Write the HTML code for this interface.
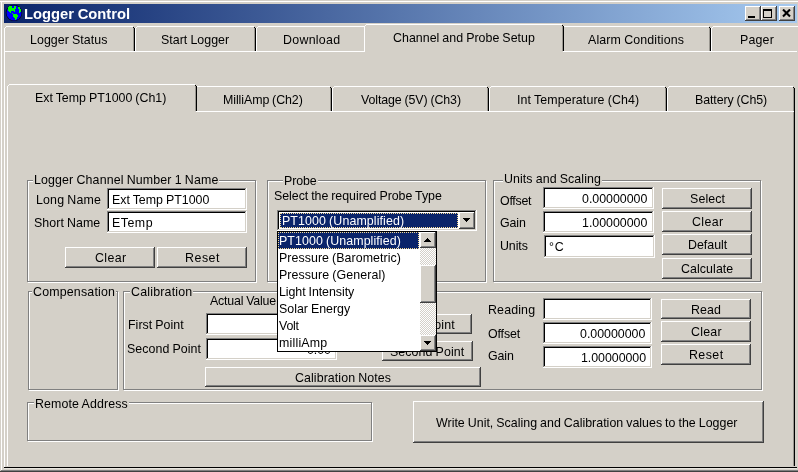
<!DOCTYPE html>
<html lang="en"><head><meta charset="utf-8"><title>Logger Control</title>
<style>
html,body{margin:0;padding:0;}
body{width:798px;height:472px;overflow:hidden;background:#d4d0c8;position:relative;
 font-family:"Liberation Sans",sans-serif;font-size:12.4px;color:#000;}
#w{position:absolute;left:0;top:0;width:798px;height:472px;overflow:hidden;background:#d4d0c8;}
#w>*{position:absolute;}
i{display:block;}
.t{line-height:14px;white-space:nowrap;will-change:transform;word-spacing:-0.45px;}
.leg{background:#d4d0c8;}
.w{color:#fff;}
.ttl{color:#fff;font-weight:bold;}
.title{background:linear-gradient(to right,#0a246a,#a6caf0);}
.btn{background:#d4d0c8;box-sizing:border-box;
 box-shadow:inset -1px -1px 0 #404040,inset 1px 1px 0 #fff,inset -2px -2px 0 #808080;}
.inp{background:#fff;box-sizing:border-box;
 box-shadow:inset -1px -1px 0 #fff,inset 1px 1px 0 #808080,inset -2px -2px 0 #d4d0c8,inset 2px 2px 0 #000;}
.grp{box-sizing:border-box;border:1px solid #808080;box-shadow:1px 1px 0 #fff,inset 1px 1px 0 #fff;}
.list{background:#fff;box-sizing:border-box;border:1px solid #000;}
.sbtrack{background-color:#fff;background-image:linear-gradient(45deg,#d4d0c8 25%,transparent 25%,transparent 75%,#d4d0c8 75%),linear-gradient(45deg,#d4d0c8 25%,transparent 25%,transparent 75%,#d4d0c8 75%);background-size:2px 2px;background-position:0 0,1px 1px;}
</style></head>
<body><div id="w">
<i style="left:0px;top:1px;width:798px;height:1px;background:#fff"></i>
<i style="left:1px;top:1px;width:1px;height:470px;background:#fff"></i>
<i style="left:0px;top:471px;width:798px;height:1px;background:#404040"></i>
<i style="left:1px;top:470px;width:797px;height:1px;background:#808080"></i>
<div class="title" style="left:4px;top:4px;width:793px;height:19px;"></div>
<svg class="abs" style="left:6px;top:5px;overflow:visible" width="16" height="16" viewBox="0 0 16 16">
<circle cx="8" cy="7.9" r="8.2" fill="#000" fill-opacity="0.8"/>
<circle cx="8" cy="7.9" r="7.5" fill="#0000ff"/>
<g fill="#00ff00" shape-rendering="crispEdges"><rect x="3" y="1" width="3" height="1"/><rect x="8" y="1" width="2" height="1"/><rect x="2" y="2" width="4" height="1"/><rect x="8" y="2" width="2" height="1"/><rect x="12" y="2" width="2" height="1"/><rect x="2" y="3" width="8" height="1"/><rect x="12" y="3" width="2" height="1"/><rect x="2" y="4" width="7" height="1"/><rect x="13" y="4" width="2" height="1"/><rect x="2" y="5" width="7" height="1"/><rect x="13" y="5" width="2" height="1"/><rect x="3" y="6" width="2" height="1"/><rect x="8" y="6" width="1" height="1"/><rect x="13" y="6" width="2" height="1"/><rect x="4" y="7" width="1" height="1"/><rect x="13" y="7" width="1" height="1"/><rect x="6" y="8" width="1" height="1"/><rect x="7" y="9" width="4" height="1"/><rect x="7" y="10" width="5" height="1"/><rect x="7" y="11" width="5" height="1"/><rect x="8" y="12" width="3" height="1"/><rect x="9" y="13" width="2" height="1"/><rect x="9" y="14" width="1" height="1"/></g>
</svg>
<span class="t ttl" style="left:23.85px;top:7.15px;transform:scaleX(1.0545);transform-origin:0 0;font-size:14.0px;">Logger Control</span>
<div class="btn" style="left:745px;top:6px;width:16px;height:15px;"></div>
<div class="btn" style="left:761px;top:6px;width:16px;height:15px;"></div>
<div class="btn" style="left:779px;top:6px;width:16px;height:15px;"></div>
<i style="left:748px;top:16px;width:7px;height:2px;background:#000"></i>
<i style="left:763px;top:9px;width:9px;height:9px;border:1px solid #000;border-top-width:2px;box-sizing:border-box"></i>
<svg class="abs" style="left:782px;top:9px" width="10" height="9" viewBox="0 0 10 9"><path d="M1 0.5 L8 7.5 M8 0.5 L1 7.5" stroke="#000" stroke-width="2.1" fill="none"/></svg>
<i style="left:4px;top:51px;width:1px;height:416px;background:#fff"></i>
<i style="left:4px;top:51px;width:793px;height:1px;background:#fff"></i>
<i style="left:4px;top:467px;width:793px;height:1px;background:#000"></i>
<i style="left:4px;top:468px;width:793px;height:1px;background:#e8e5de"></i>
<i style="left:4px;top:28px;width:1px;height:23px;background:#fff"></i>
<i style="left:5px;top:27px;width:1px;height:1px;background:#fff"></i>
<i style="left:6px;top:26px;width:127px;height:1px;background:#fff"></i>
<i style="left:134px;top:28px;width:1px;height:23px;background:#000"></i>
<i style="left:133px;top:28px;width:1px;height:23px;background:#9a9790"></i>
<i style="left:133px;top:27px;width:1px;height:1px;background:#000"></i>
<span class="t" style="left:29.90px;top:32.70px;letter-spacing:0.058px;">Logger Status</span>
<i style="left:135px;top:28px;width:1px;height:23px;background:#fff"></i>
<i style="left:136px;top:27px;width:1px;height:1px;background:#fff"></i>
<i style="left:137px;top:26px;width:117px;height:1px;background:#fff"></i>
<i style="left:255px;top:28px;width:1px;height:23px;background:#000"></i>
<i style="left:254px;top:28px;width:1px;height:23px;background:#9a9790"></i>
<i style="left:254px;top:27px;width:1px;height:1px;background:#000"></i>
<span class="t" style="left:160.90px;top:32.70px;letter-spacing:0.036px;">Start Logger</span>
<i style="left:256px;top:28px;width:1px;height:23px;background:#fff"></i>
<i style="left:257px;top:27px;width:1px;height:1px;background:#fff"></i>
<i style="left:258px;top:26px;width:106px;height:1px;background:#fff"></i>
<span class="t" style="left:282.90px;top:32.70px;letter-spacing:0.286px;">Download</span>
<i style="left:564px;top:26px;width:145px;height:1px;background:#fff"></i>
<i style="left:710px;top:28px;width:1px;height:23px;background:#000"></i>
<i style="left:709px;top:28px;width:1px;height:23px;background:#9a9790"></i>
<i style="left:709px;top:27px;width:1px;height:1px;background:#000"></i>
<span class="t" style="left:588.30px;top:32.70px;letter-spacing:0.133px;">Alarm Conditions</span>
<i style="left:711px;top:28px;width:1px;height:23px;background:#fff"></i>
<i style="left:712px;top:27px;width:1px;height:1px;background:#fff"></i>
<i style="left:713px;top:26px;width:89px;height:1px;background:#fff"></i>
<span class="t" style="left:739.90px;top:32.70px;letter-spacing:0.175px;">Pager</span>
<i style="left:364px;top:24px;width:199px;height:28px;background:#d4d0c8"></i>
<i style="left:364px;top:26px;width:1px;height:26px;background:#fff"></i>
<i style="left:365px;top:25px;width:1px;height:1px;background:#fff"></i>
<i style="left:366px;top:24px;width:196px;height:1px;background:#fff"></i>
<i style="left:563px;top:26px;width:1px;height:25px;background:#000"></i>
<i style="left:562px;top:26px;width:1px;height:25px;background:#9a9790"></i>
<i style="left:562px;top:25px;width:1px;height:1px;background:#000"></i>
<span class="t" style="left:393.30px;top:30.70px;letter-spacing:0.027px;">Channel and Probe Setup</span>
<i style="left:7px;top:111px;width:1px;height:355px;background:#fff"></i>
<i style="left:7px;top:111px;width:787px;height:1px;background:#fff"></i>
<i style="left:794px;top:111px;width:1px;height:355px;background:#000"></i>
<i style="left:793px;top:112px;width:1px;height:354px;background:#9a9790"></i>
<i style="left:197px;top:86px;width:133px;height:1px;background:#fff"></i>
<i style="left:331px;top:88px;width:1px;height:23px;background:#000"></i>
<i style="left:330px;top:88px;width:1px;height:23px;background:#9a9790"></i>
<i style="left:330px;top:87px;width:1px;height:1px;background:#000"></i>
<span class="t" style="left:223.30px;top:92.70px;letter-spacing:-0.077px;">MilliAmp (Ch2)</span>
<i style="left:332px;top:88px;width:1px;height:23px;background:#fff"></i>
<i style="left:333px;top:87px;width:1px;height:1px;background:#fff"></i>
<i style="left:334px;top:86px;width:153px;height:1px;background:#fff"></i>
<i style="left:488px;top:88px;width:1px;height:23px;background:#000"></i>
<i style="left:487px;top:88px;width:1px;height:23px;background:#9a9790"></i>
<i style="left:487px;top:87px;width:1px;height:1px;background:#000"></i>
<span class="t" style="left:360.60px;top:92.70px;letter-spacing:-0.100px;">Voltage (5V) (Ch3)</span>
<i style="left:489px;top:88px;width:1px;height:23px;background:#fff"></i>
<i style="left:490px;top:87px;width:1px;height:1px;background:#fff"></i>
<i style="left:491px;top:86px;width:174px;height:1px;background:#fff"></i>
<i style="left:666px;top:88px;width:1px;height:23px;background:#000"></i>
<i style="left:665px;top:88px;width:1px;height:23px;background:#9a9790"></i>
<i style="left:665px;top:87px;width:1px;height:1px;background:#000"></i>
<span class="t" style="left:516.90px;top:92.70px;letter-spacing:0.100px;">Int Temperature (Ch4)</span>
<i style="left:667px;top:88px;width:1px;height:23px;background:#fff"></i>
<i style="left:668px;top:87px;width:1px;height:1px;background:#fff"></i>
<i style="left:669px;top:86px;width:124px;height:1px;background:#fff"></i>
<i style="left:794px;top:88px;width:1px;height:23px;background:#000"></i>
<i style="left:793px;top:88px;width:1px;height:23px;background:#9a9790"></i>
<i style="left:793px;top:87px;width:1px;height:1px;background:#000"></i>
<span class="t" style="left:694.90px;top:92.70px;letter-spacing:-0.083px;">Battery (Ch5)</span>
<i style="left:7px;top:84px;width:189px;height:28px;background:#d4d0c8"></i>
<i style="left:7px;top:86px;width:1px;height:26px;background:#fff"></i>
<i style="left:8px;top:85px;width:1px;height:1px;background:#fff"></i>
<i style="left:9px;top:84px;width:186px;height:1px;background:#fff"></i>
<i style="left:196px;top:86px;width:1px;height:25px;background:#000"></i>
<i style="left:195px;top:86px;width:1px;height:25px;background:#9a9790"></i>
<i style="left:195px;top:85px;width:1px;height:1px;background:#000"></i>
<span class="t" style="left:34.90px;top:90.70px;letter-spacing:0.000px;">Ext Temp PT1000 (Ch1)</span>
<div class="grp" style="left:27px;top:180px;width:229px;height:102px;"></div>
<span class="t leg" style="left:33.30px;top:172.70px;letter-spacing:0.133px;padding:0 1px;">Logger Channel Number 1 Name</span>
<span class="t" style="left:35.60px;top:192.70px;letter-spacing:0.162px;">Long Name</span>
<span class="t" style="left:34.30px;top:215.70px;letter-spacing:0.067px;">Short Name</span>
<div class="inp" style="left:107px;top:188px;width:140px;height:22px;"></div>
<span class="t" style="left:111.90px;top:192.70px;letter-spacing:0.000px;">Ext Temp PT1000</span>
<div class="inp" style="left:107px;top:211px;width:140px;height:22px;"></div>
<span class="t" style="left:111.90px;top:215.70px;letter-spacing:0.500px;">ETemp</span>
<div class="btn" style="left:65px;top:247px;width:90px;height:21px;"></div>
<span class="t" style="left:94.70px;top:250.70px;letter-spacing:0.400px;">Clear</span>
<div class="btn" style="left:157px;top:247px;width:90px;height:21px;"></div>
<span class="t" style="left:184.90px;top:250.70px;letter-spacing:0.525px;">Reset</span>
<div class="grp" style="left:267px;top:180px;width:219px;height:102px;"></div>
<span class="t leg" style="left:283.30px;top:173.70px;letter-spacing:-0.100px;padding:0 1px;">Probe</span>
<span class="t" style="left:274.30px;top:188.70px;letter-spacing:-0.034px;">Select the required Probe Type</span>
<div class="grp" style="left:493px;top:180px;width:268px;height:102px;"></div>
<span class="t leg" style="left:502.60px;top:171.70px;letter-spacing:0.081px;padding:0 1px;">Units and Scaling</span>
<span class="t" style="left:499.60px;top:193.70px;letter-spacing:-0.260px;">Offset</span>
<span class="t" style="left:499.60px;top:215.70px;letter-spacing:-0.133px;">Gain</span>
<span class="t" style="left:499.60px;top:238.70px;letter-spacing:-0.075px;">Units</span>
<div class="inp" style="left:543px;top:187px;width:111px;height:22px;"></div>
<span class="t" style="left:582.20px;top:191.70px;letter-spacing:-0.011px;">0.00000000</span>
<div class="inp" style="left:543px;top:211px;width:111px;height:22px;"></div>
<span class="t" style="left:582.20px;top:215.70px;letter-spacing:-0.011px;">1.00000000</span>
<div class="inp" style="left:544px;top:235px;width:111px;height:23px;"></div>
<span class="t" style="left:548.90px;top:239.70px;letter-spacing:0.700px;">&deg;C</span>
<div class="btn" style="left:662px;top:188px;width:90px;height:21px;"></div>
<span class="t" style="left:690.30px;top:191.70px;letter-spacing:0.120px;">Select</span>
<div class="btn" style="left:662px;top:211px;width:90px;height:21px;"></div>
<span class="t" style="left:692.30px;top:214.70px;letter-spacing:0.400px;">Clear</span>
<div class="btn" style="left:662px;top:234px;width:90px;height:21px;"></div>
<span class="t" style="left:687.60px;top:237.70px;letter-spacing:0.000px;">Default</span>
<div class="btn" style="left:662px;top:258px;width:90px;height:21px;"></div>
<span class="t" style="left:681.30px;top:261.70px;letter-spacing:0.075px;">Calculate</span>
<div class="grp" style="left:28px;top:291px;width:90px;height:99px;"></div>
<span class="t leg" style="left:31.90px;top:284.70px;letter-spacing:0.182px;padding:0 1px;">Compensation</span>
<div class="grp" style="left:123px;top:291px;width:639px;height:99px;"></div>
<span class="t leg" style="left:130.30px;top:284.70px;letter-spacing:0.200px;padding:0 1px;">Calibration</span>
<span class="t" style="left:209.60px;top:293.70px;letter-spacing:-0.182px;">Actual Value</span>
<span class="t" style="left:127.90px;top:317.70px;letter-spacing:0.040px;">First Point</span>
<span class="t" style="left:126.90px;top:341.70px;letter-spacing:0.064px;">Second Point</span>
<div class="inp" style="left:206px;top:313px;width:131px;height:22px;"></div>
<div class="inp" style="left:206px;top:338px;width:131px;height:22px;"></div>
<span class="t" style="left:206px;top:342.70px;width:125px;text-align:right;">0.00</span>
<div class="btn" style="left:382px;top:314px;width:90px;height:20px;"></div>
<span class="t" style="left:398.40px;top:317.70px;letter-spacing:0.140px;">First Point</span>
<div class="btn" style="left:382px;top:341px;width:91px;height:20px;"></div>
<span class="t" style="left:389.90px;top:344.70px;letter-spacing:0.082px;">Second Point</span>
<div class="btn" style="left:205px;top:367px;width:276px;height:20px;"></div>
<span class="t" style="left:295.30px;top:370.70px;letter-spacing:0.081px;">Calibration Notes</span>
<span class="t" style="left:488.30px;top:302.70px;letter-spacing:0.150px;">Reading</span>
<span class="t" style="left:488.30px;top:326.70px;letter-spacing:-0.140px;">Offset</span>
<span class="t" style="left:488.30px;top:348.70px;letter-spacing:-0.133px;">Gain</span>
<div class="inp" style="left:543px;top:298px;width:109px;height:22px;"></div>
<div class="inp" style="left:543px;top:322px;width:109px;height:22px;"></div>
<span class="t" style="left:580.10px;top:326.70px;letter-spacing:-0.011px;">0.00000000</span>
<div class="inp" style="left:543px;top:346px;width:109px;height:22px;"></div>
<span class="t" style="left:580.95px;top:350.70px;letter-spacing:-0.039px;">1.00000000</span>
<div class="btn" style="left:661px;top:299px;width:90px;height:20px;"></div>
<span class="t" style="left:691.30px;top:302.70px;letter-spacing:0.100px;">Read</span>
<div class="btn" style="left:661px;top:321px;width:90px;height:21px;"></div>
<span class="t" style="left:691.30px;top:324.70px;letter-spacing:0.250px;">Clear</span>
<div class="btn" style="left:661px;top:344px;width:90px;height:21px;"></div>
<span class="t" style="left:688.90px;top:347.70px;letter-spacing:0.425px;">Reset</span>
<div class="grp" style="left:27px;top:402px;width:345px;height:39px;"></div>
<span class="t leg" style="left:34.30px;top:396.70px;letter-spacing:0.123px;padding:0 1px;">Remote Address</span>
<div class="btn" style="left:413px;top:401px;width:351px;height:42px;"></div>
<span class="t" style="left:436.30px;top:415.70px;letter-spacing:0.015px;">Write Unit, Scaling and Calibration values to the Logger</span>
<div class="inp" style="left:277px;top:210px;width:200px;height:21px;"></div>
<i style="left:280px;top:213px;width:178px;height:15px;background:#0a246a;outline:1px dotted #f5db95;outline-offset:-1px"></i>
<span class="t w" style="left:281.90px;top:213.70px;letter-spacing:0.105px;">PT1000 (Unamplified)</span>
<div class="btn" style="left:459px;top:212px;width:16px;height:17px;"></div>
<svg class="abs" style="left:463px;top:218px" width="8" height="5" viewBox="0 0 8 5" shape-rendering="crispEdges"><path d="M0 0 H7 L3.5 4 Z" fill="#000"/><rect x="0" y="0" width="7" height="1"/><rect x="1" y="1" width="5" height="1"/><rect x="2" y="2" width="3" height="1"/><rect x="3" y="3" width="1" height="1"/></svg>
<div class="list" style="left:277px;top:231px;width:160px;height:121px;"></div>
<i style="left:278px;top:232px;width:141px;height:17px;background:#0a246a;outline:1px dotted #f5db95;outline-offset:-1px"></i>
<span class="t w" style="left:279.30px;top:233.70px;letter-spacing:0.089px;">PT1000 (Unamplified)</span>
<span class="t" style="left:279.30px;top:250.70px;letter-spacing:0.060px;">Pressure (Barometric)</span>
<span class="t" style="left:279.30px;top:267.70px;letter-spacing:0.088px;">Pressure (General)</span>
<span class="t" style="left:279.30px;top:284.70px;letter-spacing:-0.057px;">Light Intensity</span>
<span class="t" style="left:278.90px;top:301.70px;letter-spacing:0.000px;">Solar Energy</span>
<span class="t" style="left:279.40px;top:318.70px;letter-spacing:-0.200px;">Volt</span>
<span class="t" style="left:279.30px;top:335.70px;letter-spacing:0.200px;">milliAmp</span>
<div class="sbtrack" style="left:420px;top:232px;width:16px;height:119px;"></div>
<div class="btn" style="left:420px;top:232px;width:16px;height:16px;"></div>
<div class="btn" style="left:420px;top:335px;width:16px;height:16px;"></div>
<div class="btn" style="left:420px;top:265px;width:16px;height:38px;"></div>
<svg class="abs" style="left:424px;top:238px" width="7" height="4" viewBox="0 0 7 4" shape-rendering="crispEdges"><rect x="3" y="0" width="1" height="1"/><rect x="2" y="1" width="3" height="1"/><rect x="1" y="2" width="5" height="1"/><rect x="0" y="3" width="7" height="1"/></svg>
<svg class="abs" style="left:424px;top:341px" width="7" height="4" viewBox="0 0 7 4" shape-rendering="crispEdges"><rect x="0" y="0" width="7" height="1"/><rect x="1" y="1" width="5" height="1"/><rect x="2" y="2" width="3" height="1"/><rect x="3" y="3" width="1" height="1"/></svg>
</div></body></html>
